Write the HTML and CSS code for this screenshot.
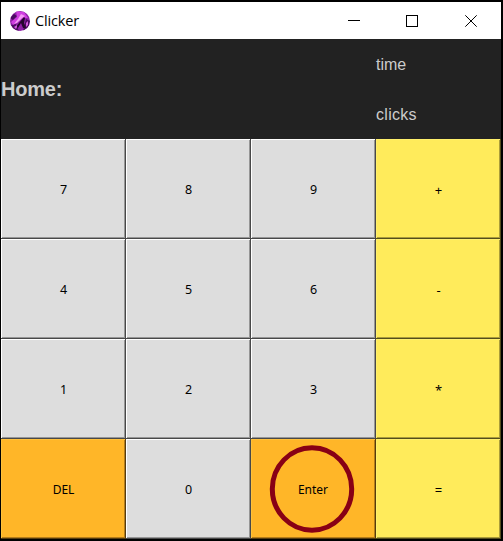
FILE: index.html
```
<!DOCTYPE html>
<html lang="en">
<head>
<meta charset="utf-8">
<title>Clicker</title>
<link rel="stylesheet" href="styles.css">
</head>
<body>
<main class="window">
  <header class="titlebar">
    <svg class="logo" width="20" height="20" viewBox="0 0 20 20">
      <defs><clipPath id="disc"><circle cx="10" cy="10" r="10"/></clipPath></defs>
      <g clip-path="url(#disc)">
        <path fill="#8f20a8" d="M0 0h20v20H0z"/>
        <path fill="#4a0c60" d="M0 7l4-4 3 2-4 4zM1 14l5-1 3 7H4zM16 8l4 2-2 9-5 1z"/>
        <path fill="#cf3ee0" d="M6 0l8 1 4 6-5 0-4 3-6 4-2-3 6-5z"/>
        <path fill="#f39af4" d="M11 3l4 2-3 2-5 5-3 1 4-5z"/>
        <path fill="#26052f" d="M6 16l3-4 5-6 1 1-1 5 2 5-3 0-2-5-3 5z"/>
        <path fill="#d65ae0" d="M4 16l3-2 0 2-1 2zM16 12l2-2v4l-2 2z"/>
      </g>
    </svg>
    <span class="title">Clicker</span>
    <svg class="controls" width="130" height="12" viewBox="0 0 130 12" fill="none" stroke="#000" shape-rendering="crispEdges">
      <path d="M0 5.500h12M58.500 .5h11v11h-11z"/>
      <path shape-rendering="auto" d="M117.300 .3l11.400 11.400M128.700 .3l-11.400 11.400"/>
    </svg>
  </header>
  <section class="display">
    <h1 class="home">Home:</h1>
    <div class="stats"><span>time</span><span class="clicks">clicks</span></div>
  </section>
  <section class="keys">
    <button class="key">7</button><button class="key">8</button><button class="key">9</button><button class="key op">+</button>
    <button class="key">4</button><button class="key">5</button><button class="key">6</button><button class="key op">-</button>
    <button class="key">1</button><button class="key">2</button><button class="key">3</button><button class="key op">*</button>
    <button class="key action">DEL</button><button class="key">0</button>
    <button class="key action enter">Enter<svg class="ring" width="86" height="88" viewBox="0 0 86 88"><ellipse cx="43" cy="44" rx="39.700" ry="41.200" fill="none" stroke="#880015" stroke-width="5"/></svg></button>
    <button class="key op">=</button>
  </section>
</main>
</body>
</html>
```
FILE: styles.css
```
* { box-sizing: border-box; }
body { margin: 0; background: #000; }
.window {
  width: 503px;
  height: 541px;
  padding: 2px 2px 2px 1px;
  background: #000;
}
.titlebar {
  display: flex;
  align-items: center;
  height: 37px;
  padding: 0 24px 0 9px;
  background: #fff;
}
.title {
  margin-left: 5px;
  font: 14.5px/20px "Open Sans", sans-serif;
  letter-spacing: -0.15px;
  color: #000;
}
.controls { margin-left: auto; margin-right: -1px; }
.display {
  display: grid;
  grid-template-columns: 375px 125px;
  grid-template-rows: 100px;
  height: 100px;
  background: #222;
  color: #ccc;
  font-family: "Liberation Sans", sans-serif;
}
.home {
  align-self: center;
  margin: 0;
  font-size: 20px;
  line-height: 24px;
  letter-spacing: -0.2px;
}
.stats {
  display: grid;
  grid-template-rows: 50px 50px;
  align-items: center;
  padding-top: 1px;
  font-size: 16px;
}
.clicks { letter-spacing: 0.3px; }
.keys {
  display: grid;
  grid-template-columns: repeat(4, 125px);
  grid-template-rows: repeat(4, 100px);
}
.key {
  position: relative;
  margin: 0;
  padding: 2px 0 0 0;
  border: 0;
  border-radius: 0;
  background: #ddd;
  box-shadow: inset -1px -1px #484848, inset 1px 1px #fff, inset -2px -2px #969696;
  font: 12.5px/16px "Noto Sans", sans-serif;
  color: #000;
}
.op {
  background: #ffeb5b;
  box-shadow: inset -1px -1px #544d1c, inset 1px 1px #fff06c, inset -2px -2px #aa9c3b;
  font-size: 13px;
}
.action {
  background: #ffb628;
  box-shadow: inset -1px -1px #553c0d, inset 1px 1px #ffc13a, inset -2px -2px #b47c1a;
  font-size: 12px;
}
.enter { padding-right: 1px; }
.ring { position: absolute; left: 18px; top: 6px; }
```
